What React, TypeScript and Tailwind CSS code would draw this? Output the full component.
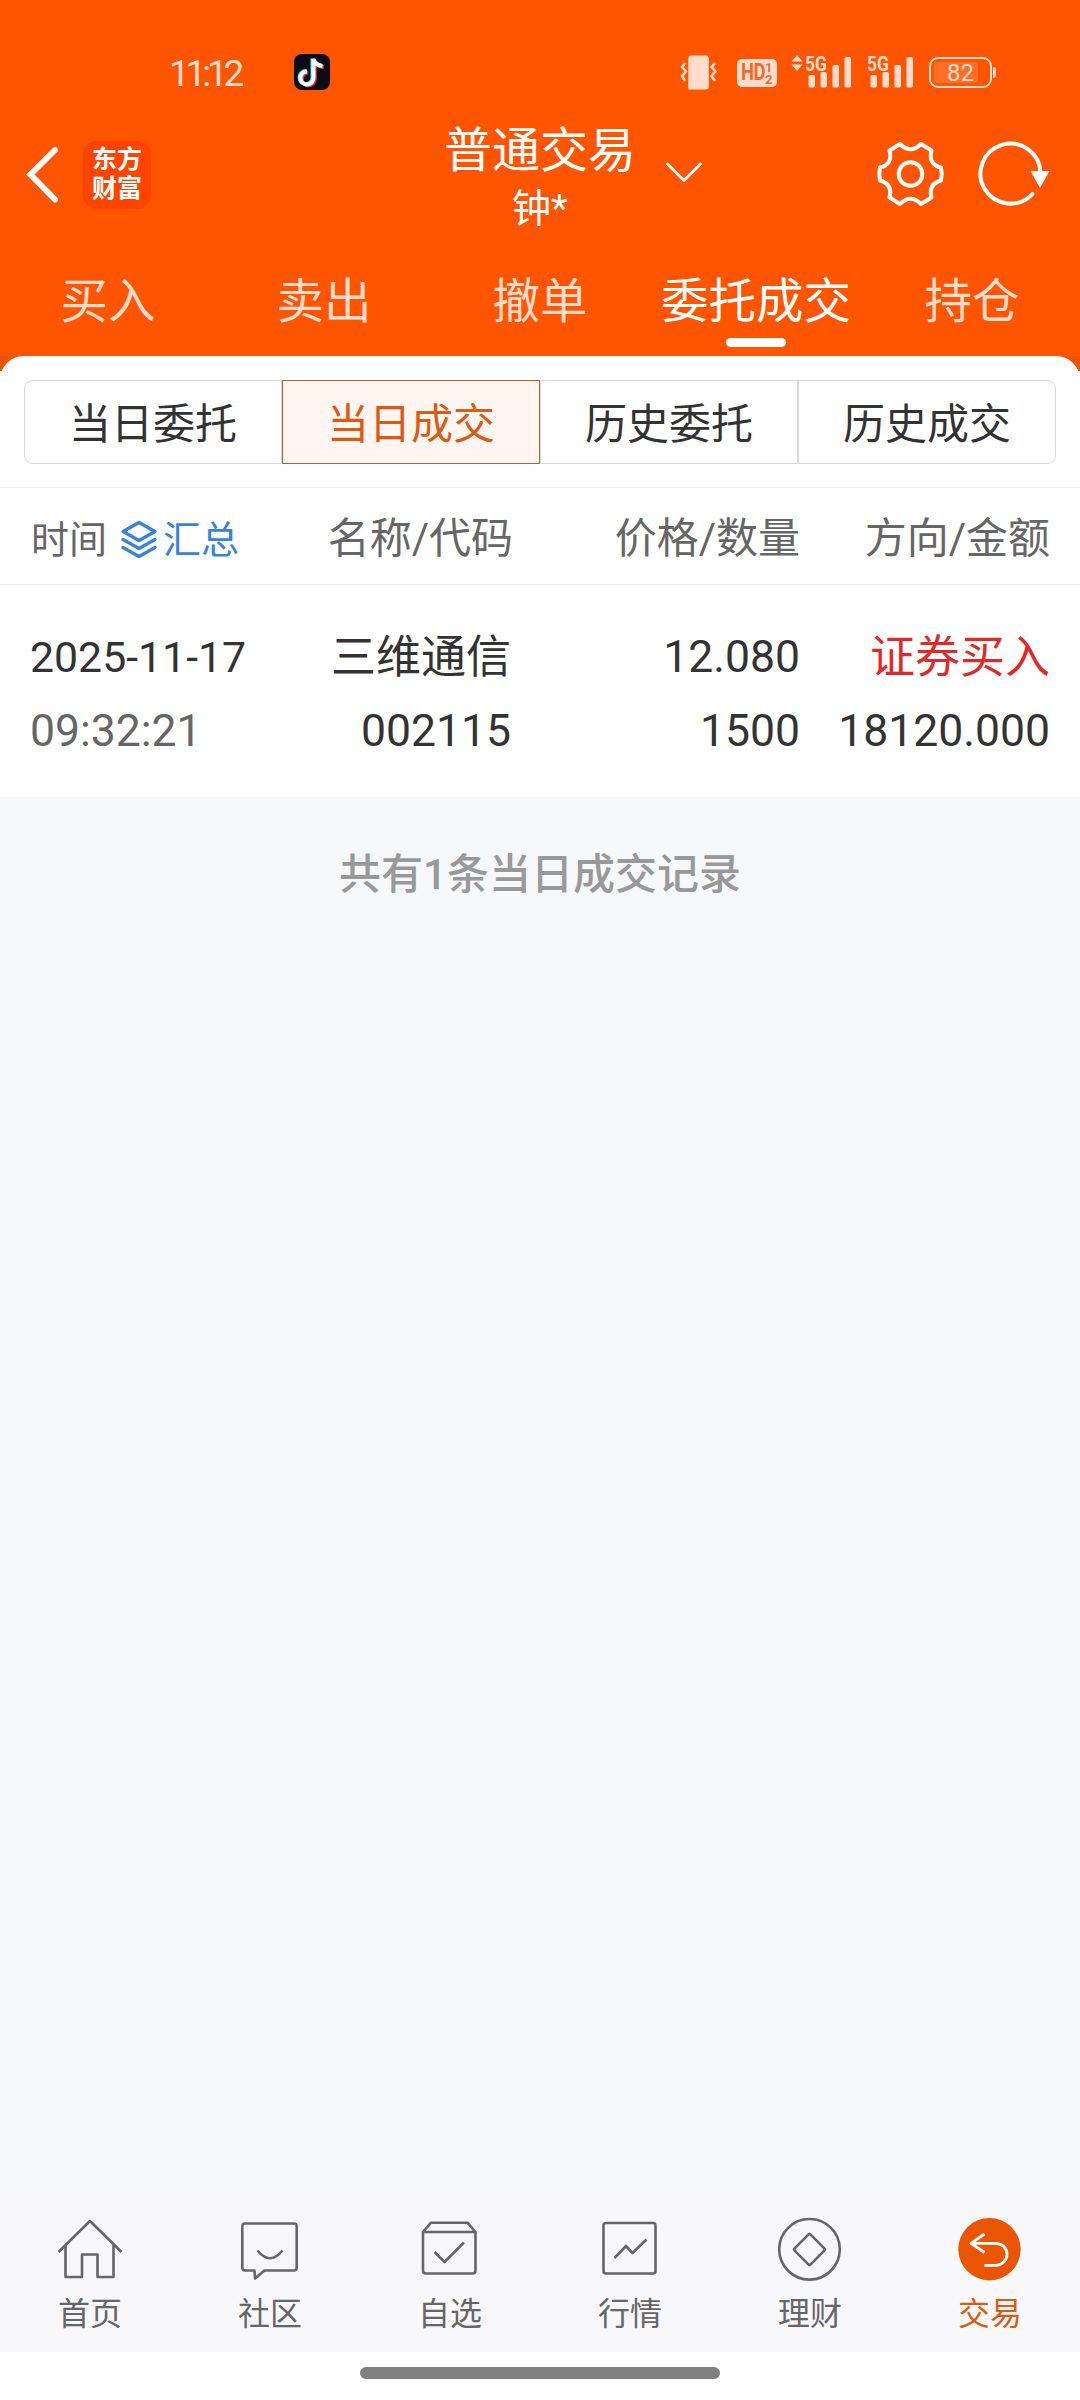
import type { ReactNode } from "react";

const StatusBar = () => (
  <div className="flex h-[112px] items-start pl-[169px] pt-[54px] text-[#ffdccc]">
    <div className="mt-[-3px] w-[125px] text-[37px] leading-[46px] tracking-[-4.2px]">11:12</div>
    <svg width="36" height="36" viewBox="0 0 36 36">
      <rect width="36" height="36" rx="8" fill="#0b0b16" />
      <g fill="none" strokeWidth="4">
        <path d="M19.500 5v19a6.500 6.500 0 1 1-6.500-6.500M19.500 5c1 4 4 6.500 9 7" stroke="#25f4ee" transform="translate(-1 -.5)" />
        <path d="M19.500 5v19a6.500 6.500 0 1 1-6.500-6.500M19.500 5c1 4 4 6.500 9 7" stroke="#fe2c55" transform="translate(1.200 1)" />
        <path d="M19.500 5v19a6.500 6.500 0 1 1-6.500-6.500M19.500 5c1 4 4 6.500 9 7" stroke="#fff" />
      </g>
    </svg>
    <svg className="ml-[350px]" width="38" height="36" viewBox="680 54 38 36" fill="none" stroke="#ffdccc" strokeWidth="2.500">
      <path d="M691.300 55.500h14.500q3 0 3 3v28q0 3-3 3h-17.500v-31q0-3 3-3z" fill="#ffdccc" stroke="none" />
      <path d="M685 63l-3 4 4 4.500-4 4.500 3 5M715 63l-3.500 4 4 4.500-4 4.500 3.500 5" />
    </svg>
    <div className="ml-[19px] mt-[5px] flex h-[28px] w-[40px] rounded-[5px] bg-[#ffdccc] pl-[4px] font-bold text-[#f06a28]">
      <span className="w-[24px] text-[23px] leading-[28px] tracking-[-0.5px]">
        <span className="inline-block origin-left scale-x-[0.8]">HD</span>
      </span>
      <span className="flex flex-col pt-[3px] text-[13px] leading-[11.5px]">
        <span>1</span>
        <span>2</span>
      </span>
    </div>
    <svg className="ml-[14px] mt-[1px]" width="12" height="16" viewBox="0 0 12 16" fill="#ffdccc">
      <path d="M6 0l5.500 6.500H.5zM6 16L.5 9.500h11z" />
    </svg>
    <div className="w-[2px]" />
    <Signal />
    <div className="w-[15px]" />
    <Signal />
    <div className="ml-[15px] mt-[3px] flex h-[31px] w-[63px] rounded-[9px] border-2 border-[#ffdccc] p-[3px]">
      <div className="h-[21px] w-[44px] rounded-[3px] bg-white/15" />
      <div className="-ml-[44px] w-[53px] text-center text-[24px] leading-[22px]">82</div>
    </div>
    <div className="ml-[1px] mt-[13px] h-[11px] w-[3px] rounded-r bg-[#ffdccc]" />
  </div>
);

const Signal = () => (
  <svg className="mt-[1px] overflow-visible" width="47" height="33" viewBox="0 0 47 33" fill="#ffdccc">
    <text x="0" y="15.700" fontSize="21" fontWeight="700" textLength="22" lengthAdjust="spacingAndGlyphs">
      5G
    </text>
    <rect x="3.500" y="20" width="6.500" height="12.500" rx="1.500" />
    <rect x="15.500" y="17" width="6.500" height="15.500" rx="1.500" />
    <rect x="27.500" y="10" width="6.500" height="22.500" rx="1.500" />
    <rect x="39.500" y="2" width="6.500" height="30.500" rx="1.500" />
  </svg>
);

const TitleBar = () => (
  <div className="flex h-[130px] text-white">
    <svg className="ml-[24px] mt-[32px]" width="38" height="62" viewBox="0 0 38 62" fill="none" stroke="currentColor" strokeWidth="6" strokeLinecap="round">
      <path d="M31 6L6.500 30.500 31 55.500" />
    </svg>
    <div className="ml-[21px] mt-[29px] flex h-[68px] w-[68px] flex-col items-center rounded-[14px] bg-[#ff4400] pt-[4px] text-[25px] font-bold leading-[29px]">
      <span>东方</span>
      <span>财富</span>
    </div>
    <div className="ml-[279px] flex w-[220px] flex-col items-center pt-[10px]">
      <div className="text-[48px] leading-[58px]">普通交易</div>
      <div className="text-[39px] leading-[58px]">钟*</div>
    </div>
    <svg className="ml-[13px] mt-[47px]" width="42" height="26" viewBox="0 0 42 26" fill="none" stroke="currentColor" strokeWidth="2.800" strokeLinecap="round" strokeLinejoin="round">
      <path d="M4.500 5l16.500 16.500L37.500 5" />
    </svg>
    <svg className="ml-[170px] mt-[28px]" width="70" height="68" viewBox="875 140 70 68" fill="none" stroke="currentColor" strokeWidth="4" strokeLinejoin="round">
      <path d="M900 144 Q910.500 154.500 921 144 L931.500 150.500 Q928 164.500 941 167.500 Q942.500 174 941 180.500 Q928 184 931.500 197.500 L921 204 Q910.500 193.500 900 204 L889.500 197.500 Q893 184 880 180.500 Q878.500 174 880 167.500 Q893 164.500 889.500 150.500Z" />
      <circle cx="910.500" cy="174" r="11.800" />
    </svg>
    <svg className="ml-[30px] mt-[28px]" width="78" height="68" viewBox="975 140 78 68" fill="none" stroke="currentColor" strokeWidth="4" strokeLinecap="round">
      <path d="M1040.500 173a30 30 0 1 0-8 21" />
      <path d="M1030.500 171h19l-9.500 17z" fill="currentColor" stroke="none" />
    </svg>
  </div>
);

const tabs = ["买入", "卖出", "撤单", "委托成交", "持仓"];

const segments = ["当日委托", "当日成交", "历史委托", "历史成交"];

type NavItem = { label: string; icon: ReactNode; active?: boolean };

const navItems: NavItem[] = [
  {
    label: "首页",
    icon: (
      <>
        <path d="M1.500 36L33 5l31.500 31" />
        <path d="M8.500 29v32H25V38.500h15.500V61h16V29" />
      </>
    ),
  },
  {
    label: "社区",
    icon: (
      <>
        <path d="M8 7.500h49q2.700 0 2.700 2.700v41.600q0 2.700-2.700 2.700H27.500L18 62.500l-.5-8H8q-2.700 0-2.700-2.700V10.200Q5.300 7.500 8 7.500z" />
        <path d="M20.500 34.500q12.500 15.500 25 0" />
      </>
    ),
  },
  {
    label: "自选",
    icon: (
      <>
        <path d="M6 16v38.500q0 3 3 3h46.500q3 0 3-3V16l-8-9.300h-36.500zM6 16h52.500" />
        <path d="M17.500 36l10 10L47 26.500" />
      </>
    ),
  },
  {
    label: "行情",
    icon: (
      <>
        <rect x="6.500" y="7" width="52" height="50.500" rx="2.500" />
        <path d="M17.500 42L29 30l6.500 7 14-13.500" />
      </>
    ),
  },
  {
    label: "理财",
    icon: (
      <>
        <circle cx="32.500" cy="33.300" r="30.300" />
        <rect x="21.200" y="22.200" width="22.600" height="22.600" rx="2" transform="rotate(45 32.500 33.500)" />
      </>
    ),
  },
  {
    label: "交易",
    active: true,
    icon: (
      <>
        <circle cx="32.500" cy="33.200" r="31.200" fill="#ea5504" stroke="none" />
        <path d="M27.500 18L14 27.300l13.500 9.200M14.500 27.300H39a11 11 0 0 1 0 22H27.500" stroke="#fff" strokeWidth="2.800" />
      </>
    ),
  },
];

const BottomNav = () => (
  <nav className="flex h-[157px] bg-[#f8f8fb] pt-[21px]">
    {navItems.map((item) => (
      <div
        key={item.label}
        className={`flex w-[180px] flex-col items-center ${item.active ? "text-[#dd5a12]" : "text-[#666666]"}`}
      >
        <svg width="66" height="66" viewBox="0 0 66 66" fill="none" stroke="currentColor" strokeWidth="2.600" strokeLinejoin="round">
          {item.icon}
        </svg>
        <span className="mt-[9px] text-[32px] leading-[46px]">{item.label}</span>
      </div>
    ))}
  </nav>
);

const TradesTable = () => (
  <div>
    <div className="flex h-[98px] items-center border-b border-t border-b-[#ebebeb] border-t-[#f3f3f3] pt-[6px] text-[42px] leading-[60px] text-[#666666]">
      <div className="flex w-[242px] items-center pl-[31px] pt-[2px] text-[38px]">
        <span className="shrink-0">时间</span>
        <svg className="mb-[2px] ml-[12px] shrink-0" width="40" height="40" viewBox="0 0 40 40" fill="none" stroke="#3b82d9" strokeWidth="3.400" strokeLinejoin="round" strokeLinecap="round">
          <path d="M20 3.500l16 9-16 9-16-9zM4 20.500l16 9 16-9M4 28.500l16 9 16-9" />
        </svg>
        <span className="ml-[4px] shrink-0 text-[#3b82d9]">汇总</span>
      </div>
      <div className="w-[271px] text-right">名称/代码</div>
      <div className="w-[287px] text-right">价格/数量</div>
      <div className="w-[250px] text-right">方向/金额</div>
    </div>
    <div className="flex h-[212px] pt-[35px] text-[44.5px] leading-[74px] text-[#333333]">
      <div className="w-[242px] pl-[30px]">
        <div className="whitespace-nowrap text-[42.8px]">2025-11-17</div>
        <div className="text-[#666666]">09:32:21</div>
      </div>
      <div className="w-[269px] text-right">
        <div className="h-[74px] text-[45px] leading-[76px]">三维通信</div>
        <div>002115</div>
      </div>
      <div className="w-[289px] text-right">
        <div>12.080</div>
        <div>1500</div>
      </div>
      <div className="w-[250px] text-right">
        <div className="h-[74px] text-[45px] leading-[76px] text-[#e02a2a]">证券买入</div>
        <div>18120.000</div>
      </div>
    </div>
  </div>
);

const App = () => {
  return (
    <div className="flex h-[2400px] w-[1080px] flex-col overflow-hidden bg-[#f7f8fa] font-['Roboto','Noto_Sans_CJK_SC',sans-serif]">
      <header className="h-[356px] shrink-0 bg-[#ff5500]">
        <StatusBar />
        <TitleBar />
        <div className="flex h-[114px] text-[47.5px] leading-[120px] text-[#ffdccc]">
          {tabs.map((tab) => (
            <div
              key={tab}
              className={`relative w-[216px] text-center ${tab === "委托成交" ? "text-white" : ""}`}
            >
              {tab}
              {tab === "委托成交" && (
                <div className="absolute left-[78px] top-[96px] h-[9px] w-[60px] rounded-full bg-white" />
              )}
            </div>
          ))}
        </div>
      </header>

      <main className="shrink-0 bg-[linear-gradient(#ec5500_15px,#ffffff_15px)]">
        <div className="rounded-t-[24px] bg-white pt-[24px]">
          <div className="mx-[24px] mb-[23px] flex h-[84px] text-[42px] leading-[88px] text-[#333333]">
            {segments.map((name) => (
              <div
                key={name}
                className={`w-[258px] border text-center first:rounded-l-[9px] last:rounded-r-[9px] ${
                  name === "当日成交"
                    ? "border-[#b8622c] bg-[#fff6f2] text-[#dd5a12]"
                    : "border-[#d8dada]"
                }`}
              >
                {name}
              </div>
            ))}
          </div>
          <TradesTable />
        </div>
      </main>

      <div className="grow pt-[46px] text-center text-[42px] font-medium leading-[64px] text-[#999999]">
        共有1条当日成交记录
      </div>

      <BottomNav />
      <div className="h-[48px] shrink-0 bg-white pt-[15px]">
        <div className="mx-auto h-[12px] w-[360px] rounded-full bg-[#808080]" />
      </div>
    </div>
  );
};

export default App;
